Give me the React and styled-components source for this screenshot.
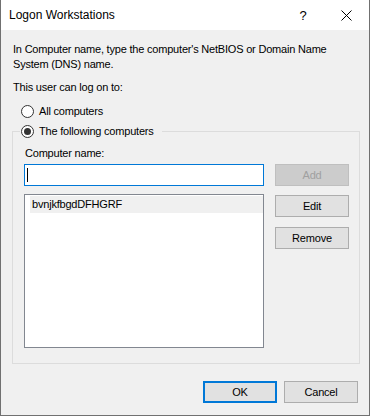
import React from 'react';
import styled, { createGlobalStyle } from 'styled-components';

export default function App() {
	return (
		<>
			<GlobalStyle />
			<Window>
				<TitleBar>
					<Title>Logon Workstations</Title>
					<TitleButton $w={40}>?</TitleButton>
					<TitleButton $w={46}>
						<svg width="11" height="11" viewBox="0 0 11 11">
							<path d="M0.5 0.5 L10.5 10.5 M10.5 0.5 L0.5 10.5" stroke="#000" strokeWidth="1" fill="none" />
						</svg>
					</TitleButton>
				</TitleBar>
				<Body>
					<Intro>
						In Computer name, type the computer's NetBIOS or Domain Name
						<br />
						System (DNS) name.
					</Intro>
					<Label $top={7}>This user can log on to:</Label>
					<RadioRow $top={8}>
						<Radio />
						All computers
					</RadioRow>
					<Group>
						<Legend>
							<RadioRow>
								<Radio $checked />
								The following computers
							</RadioRow>
						</Legend>
						<Label>Computer name:</Label>
						<Grid>
							<TextBox>
								<Caret />
							</TextBox>
							<Button disabled>Add</Button>
							<ListBox>
								<ListItem>bvnjkfbgdDFHGRF</ListItem>
							</ListBox>
							<SideButtons>
								<Button>Edit</Button>
								<Button>Remove</Button>
							</SideButtons>
						</Grid>
					</Group>
					<Footer>
						<Button $default>OK</Button>
						<Button>Cancel</Button>
					</Footer>
				</Body>
			</Window>
		</>
	);
}

const GlobalStyle = createGlobalStyle`
	html, body {
		margin: 0;
		padding: 0;
		background: #ffffff;
	}

	body {
		font-family: "Liberation Sans", Arial, sans-serif;
		font-size: 11px;
		letter-spacing: -0.2px;
		color: #000000;
	}
`;

const Window = styled.div`
	width: 370px;
	height: 416px;
	box-sizing: border-box;
	display: flex;
	flex-direction: column;
	border-left: 1px solid #707070;
	border-right: 1px solid #707070;
	border-bottom: 1px solid #707070;
	background: #f0f0f0;
`;

const TitleBar = styled.div`
	height: 30px;
	display: flex;
	align-items: center;
	background: #ffffff;
	padding-left: 8px;
`;

const Title = styled.div`
	flex: 1;
	font-size: 12px;
	letter-spacing: 0;
`;

const TitleButton = styled.div`
	width: ${({ $w }) => $w}px;
	height: 30px;
	display: flex;
	align-items: center;
	justify-content: center;
	font-size: 13px;
	letter-spacing: 0;
`;

const Body = styled.div`
	flex: 1;
	display: flex;
	flex-direction: column;
	padding: 12px 11px 0 11px;
`;

const Intro = styled.div`
	line-height: 15px;
	padding-left: 1px;
`;

const Label = styled.div`
	line-height: 16px;
	margin-top: ${({ $top }) => $top || 0}px;
	padding-left: 1px;
`;

const RadioRow = styled.label`
	display: flex;
	align-items: center;
	gap: 5px;
	height: 16px;
	margin-top: ${({ $top }) => $top || 0}px;
	padding-left: ${({ $top }) => ($top ? 9 : 0)}px;
`;

const Radio = styled.span`
	position: relative;
	width: 13px;
	height: 13px;
	box-sizing: border-box;
	border: 1px solid #333333;
	border-radius: 50%;
	background: #ffffff;

	&::after {
		content: '';
		display: ${({ $checked }) => ($checked ? 'block' : 'none')};
		position: absolute;
		left: 2px;
		top: 2px;
		width: 7px;
		height: 7px;
		border-radius: 50%;
		background: #333333;
	}
`;

const Group = styled.fieldset`
	width: 348px;
	box-sizing: border-box;
	margin: 4px 0 0 0;
	padding: 6px 10px 15px 11px;
	border: 1px solid #dcdcdc;
	min-width: 0;
`;

const Legend = styled.legend`
	width: 142px;
	box-sizing: border-box;
	margin-left: -4px;
	padding: 0 0 0 1px;
`;

const Grid = styled.div`
	display: grid;
	grid-template-columns: 240px 74px;
	column-gap: 11px;
	row-gap: 8px;
	margin-top: 3px;
`;

const TextBox = styled.div`
	height: 22px;
	box-sizing: border-box;
	border: 1px solid #0078d7;
	background: #ffffff;
	display: flex;
	align-items: center;
	padding-left: 2px;
`;

const Caret = styled.span`
	width: 1px;
	height: 14px;
	background: #000000;
`;

const ListBox = styled.div`
	height: 154px;
	box-sizing: border-box;
	border: 1px solid #828790;
	background: #ffffff;
	padding: 1px 0 0 5px;
`;

const ListItem = styled.div`
	height: 17px;
	line-height: 17px;
	padding-left: 2px;
	background: #f0f0f0;
`;

const SideButtons = styled.div`
	display: flex;
	flex-direction: column;
	gap: 10px;
	padding-top: 1px;
`;

const Button = styled.button`
	width: 74px;
	height: 22px;
	box-sizing: border-box;
	padding: 0;
	font-family: inherit;
	font-size: 11px;
	letter-spacing: -0.2px;
	color: ${({ disabled }) => (disabled ? '#a0a0a0' : '#000000')};
	background: ${({ disabled }) => (disabled ? '#cccccc' : '#e1e1e1')};
	border: ${({ $default, disabled }) =>
		$default ? '2px solid #0078d7' : disabled ? '1px solid #bfbfbf' : '1px solid #adadad'};
	border-radius: 0;
`;

const Footer = styled.div`
	display: flex;
	justify-content: flex-end;
	gap: 7px;
	margin-top: 17px;
`;
